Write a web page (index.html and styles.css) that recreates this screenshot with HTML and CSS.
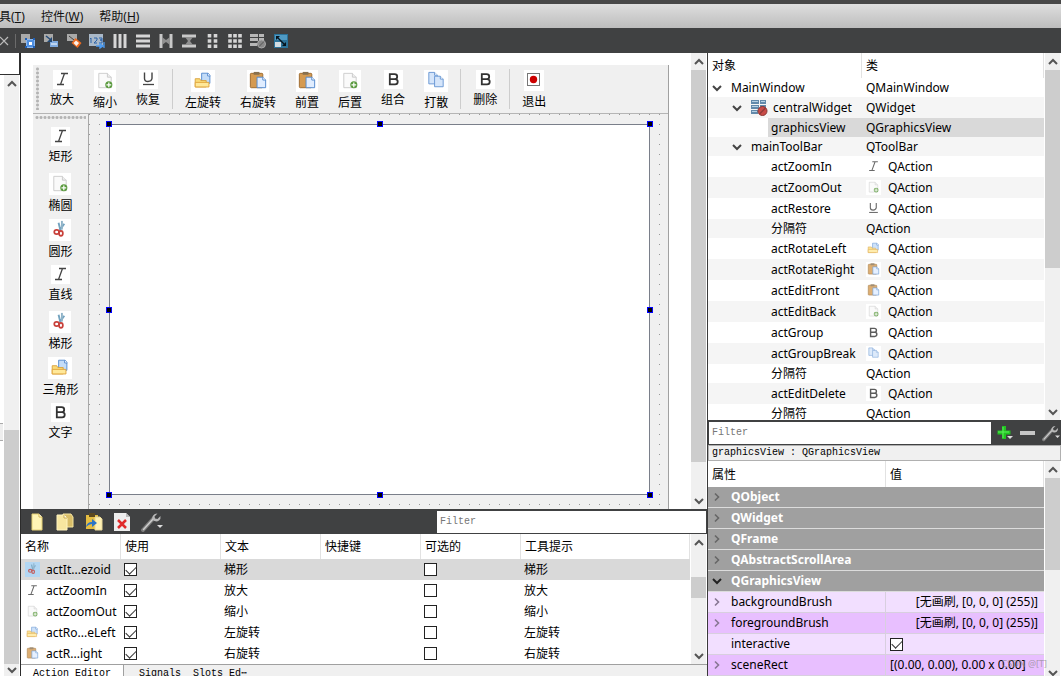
FILE: index.html
```html
<!DOCTYPE html>
<html lang="zh-CN">
<head>
<meta charset="utf-8">
<title>Qt Designer</title>
<link rel="stylesheet" href="styles.css">
</head>
<body>
<svg class="defs" aria-hidden="true">
  <symbol id="italic" viewBox="0 0 19 19"><path d="M8 3.500h7M4 14.500h7M11.500 3.500L7.500 14.500" fill="none" stroke="#444" stroke-width="1.300"/></symbol>
  <symbol id="underline" viewBox="0 0 19 19"><path d="M5.500 2.500v6q0 3 3.500 3t4-3v-6" fill="none" stroke="#444" stroke-width="1.400"/><path d="M4 14.500h11" stroke="#444" stroke-width="1.300"/></symbol>
  <symbol id="bold" viewBox="0 0 18 18"><path d="M5.500 4h4.500q2.500 0 2.500 2.300T10 8.700H5.500zM5.500 8.700H10.500q2.500 0 2.500 2.500T10.500 13.700H5.500z" fill="none" stroke="#333" stroke-width="1.700"/></symbol>
  <symbol id="newdoc" viewBox="0 0 22 23"><path d="M4.500 3.500h9l4 4v11h-13z" fill="#fafafa" stroke="#ccc"/><path d="M13.500 3.500v4h4" fill="#eee" stroke="#ccc"/><circle cx="15" cy="15.500" r="3.700" fill="#5a9a3e"/><path d="M15 13v5M12.500 15.500h5" stroke="#fff" stroke-width="1.300"/></symbol>
  <symbol id="scissors" viewBox="0 0 22 23"><path d="M9.500 4l2 8M15.500 5l-5 7" stroke="#74a3bf" stroke-width="2"/><path d="M13 2v9" stroke="#8fb3c8" stroke-width="2"/><ellipse cx="7.500" cy="13.500" rx="2.500" ry="2.200" fill="none" stroke="#c8403a" stroke-width="1.800"/><ellipse cx="12" cy="15" rx="2" ry="2.600" fill="none" stroke="#c8403a" stroke-width="1.800"/></symbol>
  <symbol id="folder" viewBox="0 0 24 24"><path d="M10.500 3.500h7l2 2v9h-9z" fill="#c3dcf8" stroke="#5289cf"/><path d="M17 3.500v3h3" fill="#fff" stroke="#5289cf"/><path d="M3.500 18.500v-9h5l1 2h6v7z" fill="#fbdb77" stroke="#d9a23e"/><path d="M3.500 18.500v-5h15v5z" fill="#ffe899" stroke="#dfa33a"/></symbol>
  <symbol id="paste" viewBox="0 0 23 23"><rect x="3.500" y="3.500" width="13" height="15" rx="1" fill="#d59a50" stroke="#9c6a2e"/><path d="M7 2h6v3H7z" fill="#89714f"/><path d="M10.500 7.500h6l3 3v8h-9z" fill="#e0edff" stroke="#5289cf"/><path d="M16.500 7.500v3h3" fill="#fff" stroke="#5289cf"/></symbol>
  <symbol id="copy" viewBox="0 0 24 23"><path d="M4.500 2.500h6l3 3v9h-9z" fill="#d5e5fa" stroke="#6a98d4"/><path d="M10.500 6.500h6l3 3v8h-9z" fill="#d5e5fa" stroke="#6a98d4"/><path d="M16.500 6.500v3h3M10.500 2.500v3h3" fill="#fff" stroke="#6a98d4"/></symbol>
  <symbol id="quit" viewBox="0 0 20 21"><rect x="3.500" y="3.500" width="12" height="12" fill="#fff" stroke="#777"/><circle cx="9.500" cy="9.500" r="3.700" fill="#c00"/></symbol>
  <symbol id="down" viewBox="0 0 10 10"><path d="M1 3l4 4 4-4" fill="none" stroke="currentColor" stroke-width="2"/></symbol>
  <symbol id="up" viewBox="0 0 10 10"><path d="M1 7l4-4 4 4" fill="none" stroke="currentColor" stroke-width="2"/></symbol>
  <symbol id="right" viewBox="0 0 10 10"><path d="M3 1.500L6.500 5 3 8.500" fill="none" stroke="currentColor" stroke-width="1.600"/></symbol>
  <symbol id="wrench" viewBox="0 0 22 20"><path d="M2 18L12 7" stroke="#7b7b7b" stroke-width="4" stroke-linecap="round"/><path d="M2.500 17.500L12 7" stroke="#ccc" stroke-width="1.500" stroke-linecap="round"/><path d="M16.500 1.500L13.500 4.500l.5 2 2.500.5 3-3q.5 3-1.500 4.500t-4.500.5q-3-1.500-2-4.500 1.500-3 5-3z" fill="#b9b9b9"/><path d="M16 13h6l-3 3z" fill="#ddd"/></symbol>
  <symbol id="page" viewBox="0 0 16 18"><path d="M3 1h7l3 3v13H3z" fill="#fff4b5" stroke="#e3cf74"/><path d="M10 1v3h3" fill="#fff" stroke="#d3b650"/></symbol>
  <symbol id="pages" viewBox="0 0 18 18"><path d="M7 1h8l2 3v10H7z" fill="#d8bd68" stroke="#f5e5a0"/><path d="M1 2h7l3 3v12H1z" fill="#f7e6a0" stroke="#fff4c0"/><path d="M8 2v3h3" fill="#fff" stroke="#c9ab50"/></symbol>
  <symbol id="pastepage" viewBox="0 0 18 18"><path d="M1 2h12v14H1z" fill="#e5bd42"/><path d="M4 0h6v4H4z" fill="#5c4920"/><path d="M10 4h5l2 2v11h-7z" fill="#fff1b5" stroke="#e8d898"/><path d="M1 14q1-5 6-5V6l5 4-5 4v-3q-3 0-6 3z" fill="#2b74c7"/></symbol>
  <symbol id="deletepage" viewBox="0 0 16 18"><path d="M0 0h12l4 4v14H0z" fill="#eee"/><path d="M12 0v4h4" fill="#bbb"/><path d="M4 7l8 8M12 7l-8 8" stroke="#e02b2b" stroke-width="2.500"/></symbol>
  <symbol id="grid-off" viewBox="0 0 17 16"><path d="M0 0h8v4H0zM9 0h6v4H9zM0 5h8v4H0zM9 5h6v4H9zM0 10h7v4H0z" fill="#6289aa"/><path d="M1 1h6v1H1zM10 1h4v1h-4zM1 6h6v1H1zM1 11h5v1H1z" fill="#b7d1e4"/><circle cx="11.500" cy="11" r="4.500" fill="#c94b47" stroke="#8b3735"/><path d="M8.500 14l6-6" stroke="#913a38" stroke-width="1.500"/></symbol>
</svg>

<div class="app">
  <div class="strip"></div>
  <nav class="menubar">
    <a href="#tools" class="clipped">具(<u>T</u>)</a><a href="#widgets">控件(<u>W</u>)</a><a href="#help">帮助(<u>H</u>)</a>
  </nav>
  <div class="iconbar">
    <button class="close" aria-label="关闭"><svg viewBox="0 0 10 10"><path d="M0 1l8 8M8 1L0 9" stroke="#bbb" stroke-width="1.200"/></svg></button>
    <button aria-label="编辑控件"><svg viewBox="0 0 16 16"><path d="M1 1h9v9H1z" fill="#a9a9a9"/><path d="M6.500 6.500h8v8h-8z" fill="#4f8fe0" stroke="#8cb8f0"/><path d="M9 9h3v3H9z" fill="#fff"/><path d="M5 5h2v2H5zM13 13h2v2h-2zM13 5h2v2h-2zM5 13h2v2H5z" fill="#1f5fb5"/></svg></button>
    <button aria-label="编辑信号/槽"><svg viewBox="0 0 16 16"><path d="M1 1h9v8H1z" fill="#a9a9a9"/><path d="M7 8h8v6H7z" fill="#7faadf"/><path d="M8 11h6" stroke="#fff"/><path d="M3 3l5 4" stroke="#234a77" stroke-width="1.500"/><path d="M9 4v5H4z" fill="#234a77"/></svg></button>
    <button aria-label="编辑伙伴"><svg viewBox="0 0 16 16"><path d="M1 1h10v7H1z" fill="#a9a9a9"/><path d="M3 3l5 4" stroke="#444"/><path d="M9.500 5l6 5-4 5-6-5z" fill="#ee6b20"/><path d="M10 7.500l3 2.500-2.500 3-3-3z" fill="#fff1e8"/></svg></button>
    <button aria-label="编辑Tab顺序"><svg viewBox="0 0 16 16"><path d="M0 1h14v12H0z" fill="#a9b8c8"/><path d="M2 5v5M1 6l1-1M5 5h3v2L5 10h3M10 5h3v2h-2 2v3h-3" fill="none" stroke="#2a62a9"/><path d="M7 13h6M11 11l3 2-3 2zM15 9v6" stroke="#4d9bf0" stroke-width="1.300"/></svg></button>
    <button aria-label="水平布局"><svg viewBox="0 0 16 16"><path d="M3 1v14M8 1v14M13 1v14" stroke="#d6d6d6" stroke-width="3"/></svg></button>
    <button aria-label="垂直布局"><svg viewBox="0 0 16 16"><path d="M1 3h14M1 8h14M1 13h14" stroke="#d6d6d6" stroke-width="3"/></svg></button>
    <button aria-label="水平分裂器布局"><svg viewBox="0 0 16 16"><path d="M3 1v14M13 1v14" stroke="#c8c8c8" stroke-width="3"/><path d="M4 4l4 3 4-3v8L8 9l-4 3z" fill="#909090"/></svg></button>
    <button aria-label="垂直分裂器布局"><svg viewBox="0 0 16 16"><path d="M1 3h14M1 13h14" stroke="#c8c8c8" stroke-width="3"/><path d="M4 4h8L9 8l3 4H4l3-4z" fill="#909090"/></svg></button>
    <button aria-label="表单布局"><svg viewBox="0 0 16 16"><path d="M5.500 1v14M11.500 1v14" stroke="#d6d6d6" stroke-width="3.600" stroke-dasharray="3.500 1.700"/></svg></button>
    <button aria-label="栅格布局"><svg viewBox="0 0 16 16"><path d="M3 1v14M8 1v14M13 1v14" stroke="#d6d6d6" stroke-width="3.600" stroke-dasharray="3.500 1.700"/></svg></button>
    <button aria-label="打破布局"><svg viewBox="0 0 16 16"><path d="M0 1h8v3H0zM9 1h5v3H9zM0 5h8v3H0zM9 5h5v3H9zM0 10h7v3H0z" fill="#b7b7b7"/><circle cx="11.500" cy="11" r="4" fill="#888" stroke="#aaa"/><path d="M9 13.500l5-5" stroke="#555"/></svg></button>
    <button aria-label="调整大小"><svg viewBox="0 0 16 16"><path d="M1 1h14v14H1z" fill="#2c7299"/><path d="M2 9h6v5H2z" fill="#d3dce2"/><path d="M2 2h12v5H2z" fill="#4f9ac4"/><path d="M4 4l8 8" stroke="#07141d" stroke-width="1.300"/><path d="M3 3h4L3 7zM13 13H9l4-4z" fill="#07141d"/></svg></button>
  </div>

  <main class="workspace">
    <aside class="widgetbox">
      <div class="box-filter"></div>
      <div class="box-body">
        <div class="box-list"><span class="box-button"></span></div>
        <div class="scroll s-box"><button aria-label="向上"><svg><use href="#up"/></svg></button><i class="thumb"></i><button aria-label="向下"><svg><use href="#down"/></svg></button></div>
      </div>
    </aside>

    <section class="center">
      <div class="editor">
        <div class="form">
          <div class="toolbar">
            <i class="grip-v"></i>
            <button class="tool"><svg class="i19"><use href="#italic"/></svg>放大</button>
            <button class="tool"><svg class="i22"><use href="#newdoc"/></svg>缩小</button>
            <button class="tool"><svg class="i19"><use href="#underline"/></svg>恢复</button>
            <i class="sep"></i>
            <button class="tool"><svg class="i24"><use href="#folder"/></svg>左旋转</button>
            <button class="tool"><svg class="i22"><use href="#paste"/></svg>右旋转</button>
            <button class="tool"><svg class="i22"><use href="#paste"/></svg>前置</button>
            <button class="tool"><svg class="i22"><use href="#newdoc"/></svg>后置</button>
            <button class="tool"><svg class="i19"><use href="#bold"/></svg>组合</button>
            <button class="tool"><svg class="i24"><use href="#copy"/></svg>打散</button>
            <i class="sep"></i>
            <button class="tool"><svg class="i19"><use href="#bold"/></svg>删除</button>
            <i class="sep"></i>
            <button class="tool"><svg class="i22 quit"><use href="#quit"/></svg>退出</button>
          </div>
          <div class="form-body">
            <div class="sidebar">
              <i class="grip-h"></i>
              <button class="tool"><svg class="i19"><use href="#italic"/></svg>矩形</button>
              <button class="tool"><svg class="i22"><use href="#newdoc"/></svg>椭圆</button>
              <button class="tool"><svg class="i22"><use href="#scissors"/></svg>圆形</button>
              <button class="tool"><svg class="i19"><use href="#italic"/></svg>直线</button>
              <button class="tool"><svg class="i22"><use href="#scissors"/></svg>梯形</button>
              <button class="tool"><svg class="i24"><use href="#folder"/></svg>三角形</button>
              <button class="tool"><svg class="i19"><use href="#bold"/></svg>文字</button>
            </div>
            <div class="canvas">
              <div class="view">
                <i class="h tl"></i><i class="h tc"></i><i class="h tr"></i><i class="h ml"></i><i class="h mr"></i><i class="h bl"></i><i class="h bc"></i><i class="h br"></i>
              </div>
            </div>
          </div>
        </div>
        <div class="scroll s-form"><button aria-label="向上"><svg><use href="#up"/></svg></button><i class="thumb"></i><button aria-label="向下"><svg><use href="#down"/></svg></button></div>
      </div>

      <div class="actions">
        <div class="dockbar">
          <button aria-label="新建"><svg class="d16"><use href="#page"/></svg></button>
          <button aria-label="复制"><svg class="d18"><use href="#pages"/></svg></button>
          <button aria-label="粘贴"><svg class="d18"><use href="#pastepage"/></svg></button>
          <button aria-label="删除"><svg class="d16"><use href="#deletepage"/></svg></button>
          <button aria-label="配置"><svg class="d22"><use href="#wrench"/></svg></button>
          <input class="filter" type="text" placeholder="Filter" aria-label="Filter">
        </div>
        <div class="pane">
          <table class="grid">
            <colgroup><col class="c100"><col class="c100"><col class="c100"><col class="c100"><col class="c100"><col></colgroup>
            <thead><tr><th>名称</th><th>使用</th><th>文本</th><th>快捷键</th><th>可选的</th><th>工具提示</th></tr></thead>
            <tbody>
              <tr class="selected"><td><span class="act"><svg class="s15 hot"><use href="#scissors"/></svg>actIt...ezoid</span></td><td><input type="checkbox" checked aria-label="使用"></td><td>梯形</td><td></td><td><input type="checkbox" aria-label="可选的"></td><td>梯形</td></tr>
              <tr><td><span class="act"><svg class="s15"><use href="#italic"/></svg>actZoomIn</span></td><td><input type="checkbox" checked aria-label="使用"></td><td>放大</td><td></td><td><input type="checkbox" aria-label="可选的"></td><td>放大</td></tr>
              <tr><td><span class="act"><svg class="s15"><use href="#newdoc"/></svg>actZoomOut</span></td><td><input type="checkbox" checked aria-label="使用"></td><td>缩小</td><td></td><td><input type="checkbox" aria-label="可选的"></td><td>缩小</td></tr>
              <tr><td><span class="act"><svg class="s15"><use href="#folder"/></svg>actRo...eLeft</span></td><td><input type="checkbox" checked aria-label="使用"></td><td>左旋转</td><td></td><td><input type="checkbox" aria-label="可选的"></td><td>左旋转</td></tr>
              <tr><td><span class="act"><svg class="s15"><use href="#paste"/></svg>actR...ight</span></td><td><input type="checkbox" checked aria-label="使用"></td><td>右旋转</td><td></td><td><input type="checkbox" aria-label="可选的"></td><td>右旋转</td></tr>
            </tbody>
          </table>
          <div class="scroll s-act"><button aria-label="向上"><svg><use href="#up"/></svg></button><i class="thumb"></i><button aria-label="向下"><svg><use href="#down"/></svg></button></div>
        </div>
        <div class="tabs"><button class="tab active">Action Editor</button><button class="tab">Signals&nbsp;&nbsp;Slots Ed⋯</button></div>
      </div>
    </section>

    <aside class="inspector">
      <div class="pane tree-pane">
        <table class="tree">
          <colgroup><col class="c-object"><col></colgroup>
          <thead><tr><th>对象</th><th>类</th></tr></thead>
          <tbody>
            <tr><td class="l0"><span class="node"><button class="twist" aria-label="折叠"><svg><use href="#down"/></svg></button>MainWindow</span></td><td>QMainWindow</td></tr>
            <tr class="tall"><td class="l1"><span class="node"><button class="twist" aria-label="折叠"><svg><use href="#down"/></svg></button><svg class="s17"><use href="#grid-off"/></svg>centralWidget</span></td><td>QWidget</td></tr>
            <tr class="current"><td class="l2"><span class="node">graphicsView</span></td><td>QGraphicsView</td></tr>
            <tr><td class="l1"><span class="node"><button class="twist" aria-label="折叠"><svg><use href="#down"/></svg></button>mainToolBar</span></td><td>QToolBar</td></tr>
            <tr class="tall"><td class="l2">actZoomIn</td><td><span class="act"><svg class="s15"><use href="#italic"/></svg>QAction</span></td></tr>
            <tr class="tall"><td class="l2">actZoomOut</td><td><span class="act"><svg class="s15"><use href="#newdoc"/></svg>QAction</span></td></tr>
            <tr class="tall"><td class="l2">actRestore</td><td><span class="act"><svg class="s15"><use href="#underline"/></svg>QAction</span></td></tr>
            <tr><td class="l2">分隔符</td><td>QAction</td></tr>
            <tr class="tall"><td class="l2">actRotateLeft</td><td><span class="act"><svg class="s15"><use href="#folder"/></svg>QAction</span></td></tr>
            <tr class="tall"><td class="l2">actRotateRight</td><td><span class="act"><svg class="s15"><use href="#paste"/></svg>QAction</span></td></tr>
            <tr class="tall"><td class="l2">actEditFront</td><td><span class="act"><svg class="s15"><use href="#paste"/></svg>QAction</span></td></tr>
            <tr class="tall"><td class="l2">actEditBack</td><td><span class="act"><svg class="s15"><use href="#newdoc"/></svg>QAction</span></td></tr>
            <tr class="tall"><td class="l2">actGroup</td><td><span class="act"><svg class="s15"><use href="#bold"/></svg>QAction</span></td></tr>
            <tr class="tall"><td class="l2">actGroupBreak</td><td><span class="act"><svg class="s15"><use href="#copy"/></svg>QAction</span></td></tr>
            <tr><td class="l2">分隔符</td><td>QAction</td></tr>
            <tr class="tall"><td class="l2">actEditDelete</td><td><span class="act"><svg class="s15"><use href="#bold"/></svg>QAction</span></td></tr>
            <tr><td class="l2">分隔符</td><td>QAction</td></tr>
          </tbody>
        </table>
        <div class="scroll s-tree"><button aria-label="向上"><svg><use href="#up"/></svg></button><i class="thumb"></i><button aria-label="向下"><svg><use href="#down"/></svg></button></div>
      </div>
      <div class="propbar">
        <input class="filter" type="text" placeholder="Filter" aria-label="Filter">
        <button aria-label="添加"><svg class="d18" viewBox="0 0 18 18"><path d="M8 2v13M1.500 8.500h13" stroke="#21c321" stroke-width="4"/><path d="M7 3v11M2 8h11" stroke="#5df05d"/><path d="M11 12h6l-3 3z" fill="#ddd"/></svg></button>
        <button aria-label="移除"><svg class="d18" viewBox="0 0 18 18"><path d="M1 9h15" stroke="#c6c6c6" stroke-width="4"/></svg></button>
        <button aria-label="配置"><svg class="d18"><use href="#wrench"/></svg></button>
      </div>
      <div class="proptitle">graphicsView : QGraphicsView</div>
      <div class="pane prop-pane">
        <table class="props">
          <colgroup><col class="c-prop"><col></colgroup>
          <thead><tr><th>属性</th><th>值</th></tr></thead>
          <tbody>
            <tr class="group"><td colspan="2"><span class="node"><button class="twist" aria-label="展开"><svg><use href="#right"/></svg></button>QObject</span></td></tr>
            <tr class="group"><td colspan="2"><span class="node"><button class="twist" aria-label="展开"><svg><use href="#right"/></svg></button>QWidget</span></td></tr>
            <tr class="group"><td colspan="2"><span class="node"><button class="twist" aria-label="展开"><svg><use href="#right"/></svg></button>QFrame</span></td></tr>
            <tr class="group"><td colspan="2"><span class="node"><button class="twist" aria-label="展开"><svg><use href="#right"/></svg></button>QAbstractScrollArea</span></td></tr>
            <tr class="group open"><td colspan="2"><span class="node"><button class="twist" aria-label="折叠"><svg><use href="#down"/></svg></button>QGraphicsView</span></td></tr>
            <tr class="light"><td><span class="node"><button class="twist" aria-label="展开"><svg><use href="#right"/></svg></button>backgroundBrush</span></td><td class="brush">[无画刷, [0, 0, 0] (255)]</td></tr>
            <tr class="deep"><td><span class="node"><button class="twist" aria-label="展开"><svg><use href="#right"/></svg></button>foregroundBrush</span></td><td class="brush">[无画刷, [0, 0, 0] (255)]</td></tr>
            <tr class="light"><td class="leaf"><label for="interactive">interactive</label></td><td><input id="interactive" type="checkbox" checked></td></tr>
            <tr class="deep"><td><span class="node"><button class="twist" aria-label="展开"><svg><use href="#right"/></svg></button>sceneRect</span></td><td>[(0.00, 0.00), 0.00 x 0.00]</td></tr>
          </tbody>
        </table>
        <div class="scroll s-prop"><button aria-label="向上"><svg><use href="#up"/></svg></button><i class="thumb"></i><button aria-label="向下"><svg><use href="#down"/></svg></button></div>
        <span class="watermark">CSDN @[T]</span>
      </div>
    </aside>
  </main>
</div>
</body>
</html>
```

FILE: styles.css
```css
* { box-sizing: border-box; }
body {
  margin: 0;
  color: #000;
  background: #fff;
  font: 12px/16px "Noto Sans", "Noto Sans CJK SC", sans-serif;
}
button {
  padding: 0;
  border: 0;
  background: none;
  color: inherit;
  font: inherit;
}
svg { display: block; flex: none; }
.defs { position: absolute; width: 0; height: 0; }
i { display: block; flex: none; }

.app { display: flex; flex-direction: column; height: 100vh; overflow: hidden; }
.strip { flex: none; height: 4px; background: #474747; }
.menubar {
  flex: none;
  display: flex;
  align-items: center;
  gap: 16px;
  height: 24px;
  padding-top: 2px;
  background: linear-gradient(#dedede, #bdbdbd);
}
.menubar a { color: #111; text-decoration: none; }
.menubar .clipped { margin-left: -1px; }

.iconbar {
  flex: none;
  display: flex;
  align-items: center;
  gap: 7px;
  height: 25px;
  background: #404142;
}
.iconbar svg { width: 16px; height: 16px; }
.iconbar .close { width: 16px; margin-right: -3px; border-right: 1px solid #6b6b6b; }
.iconbar .close svg { width: 10px; height: 14px; }

.workspace { flex: 1; min-height: 0; display: grid; grid-template-columns: 21px 1fr 354px; }

/* Scroll bars */
.scroll { flex: none; width: 16px; display: flex; flex-direction: column; background: #f0f0f0; border-right: 1px solid #fff; }
.scroll button { flex: none; display: grid; place-items: center; height: 17px; color: #555; }
.scroll button:last-child { margin-top: auto; }
.scroll svg { width: 10px; height: 10px; }
.thumb { background: #cdcdcd; }
.s-box .thumb { height: 39%; margin-top: auto; }
.s-box button:last-child { margin: 0; height: 12px; }
.s-form .thumb { height: 86%; }
.s-tree .thumb { height: 54%; }
.s-act .thumb { height: 21px; margin-top: 26px; }
.s-prop .thumb { height: 43%; }
.s-prop button:last-child { height: 8px; overflow: hidden; }

/* Widget box */
.widgetbox { display: flex; flex-direction: column; border-right: 1px solid #2b2b2b; min-height: 0; }
.box-filter { flex: none; height: 22px; border: solid #303030; border-width: 0 1px 1px 0; }
.box-body { flex: 1; display: flex; min-height: 0; }
.box-list { width: 4px; display: flex; align-items: flex-end; }
.box-button { width: 3px; height: 18px; margin-bottom: 235px; border: solid #aaa; border-width: 1px 0; background: #eee; }

/* Form editor */
.center { display: flex; flex-direction: column; min-width: 0; min-height: 0; }
.editor { flex: 1; display: flex; justify-content: space-between; min-height: 0; }
.form {
  flex: 1;
  display: flex;
  flex-direction: column;
  margin: 12px 22px 0 12px;
  border-right: 1px solid #a0a0a0;
  background: #f0f0f0;
  min-width: 0;
}
.toolbar {
  flex: none;
  display: flex;
  gap: 1px;
  height: 49px;
  padding: 2px 0 0 3px;
  border-bottom: 1px solid #b5b5b5;
}
.grip-v {
  width: 3px;
  height: 43px;
  margin-right: 1px;
  background: radial-gradient(circle, #b4b4b4 1px, transparent 2px) 0 0 / 3px 4px;
}
.grip-h {
  width: 51px;
  height: 3px;
  margin-bottom: 7px;
  background: radial-gradient(circle, #b4b4b4 1px, transparent 2px) 0 0 / 4px 3px;
}
.sep { width: 1px; height: 40px; margin: 2px 2px; background: #cdcdcd; }
.tool {
  flex: none;
  display: flex;
  flex-direction: column;
  align-items: center;
  gap: 3px;
  padding: 3px 9px 0;
  white-space: nowrap;
}
.tool svg { background: #fff; }
.i19 { width: 19px; height: 19px; }
.i22 { width: 22px; height: 22px; }
.i24 { width: 24px; height: 22px; }
.i22.quit { width: 20px; height: 21px; }
.form-body { flex: 1; display: flex; min-height: 0; }
.sidebar {
  flex: none;
  display: flex;
  flex-direction: column;
  align-items: center;
  width: 56px;
  padding-top: 2px;
  border-right: 1px solid #a8a8a8;
  overflow: hidden;
}
.sidebar .tool { height: 46px; padding: 1px 0 0; }
.canvas {
  flex: 1;
  display: flex;
  padding: 10px 18px 14px 20px;
  background: conic-gradient(from 0deg at 1px 1px, #f0f0f0 270deg, #999 0) 0 0 / 10px 10px;
}
.view { flex: 1; position: relative; border: 1px solid #7a7f8a; background: #fff; }
.h { position: absolute; width: 6px; height: 6px; border: 1px solid #00f; background: #000; }
.tl, .tc, .tr { top: -4px; }
.ml, .mr { top: calc(50% - 3px); }
.bl, .bc, .br { bottom: -4px; }
.tl, .ml, .bl { left: -4px; }
.tc, .bc { left: calc(50% - 3px); }
.tr, .mr, .br { right: -4px; }

/* Docks */
.actions { flex: none; }
.dockbar, .propbar { display: flex; align-items: center; height: 25px; background: #404142; }
.dockbar { padding: 1px 1px 1px 8px; gap: 11px; }
.dockbar .filter { width: 269px; margin-left: auto; }
.propbar { gap: 5px; padding: 1px 1px 1px 1px; flex: none; }
.propbar .filter { flex: 1; }
.filter {
  min-width: 0;
  height: 22px;
  padding: 0 3px;
  border: 0;
  border-radius: 0;
  background: #fff;
  font: 10px/22px "Liberation Mono", monospace;
}
.filter::placeholder { color: #777; opacity: 1; }
.d16 { width: 16px; height: 18px; }
.d18 { width: 18px; height: 18px; }
.d22 { width: 22px; height: 20px; }

.pane { display: flex; min-height: 0; position: relative; }
table { flex: 1; width: 100%; min-width: 0; table-layout: fixed; border-spacing: 0; align-self: flex-start; margin-right: 1px; }
th { height: 25px; padding: 1px 4px 0; border-right: 1px solid #e2e2e2; text-align: left; font-weight: 400; }
td { height: 21px; padding: 0 4px; white-space: nowrap; line-height: 18px; overflow: hidden; }
.c100 { width: 100px; }
.c-object { width: 154px; }
.c-prop { width: 178px; }
.act, .node { display: flex; align-items: center; }
.act { gap: 6px; }
.s15 { width: 15px; height: 15px; background: #fff; }
.s15 use { opacity: .8; }
.s15.hot { background: #b3d7f3; }
.s17 { width: 17px; height: 16px; margin-right: 5px; }
.selected td { background: #d9d9d9; }
.grid td:not(:first-child) { padding-left: 3px; }

input[type="checkbox"] {
  appearance: none;
  display: grid;
  place-items: center;
  width: 13px;
  height: 13px;
  margin: 0;
  border: 1px solid #222;
  background: #fff;
}
input[type="checkbox"]:checked::after {
  content: "";
  width: 9px;
  height: 5px;
  border: solid #333;
  border-width: 0 0 1px 1px;
  transform: translateY(-1px) rotate(-45deg);
}

.tabs {
  display: flex;
  height: 12px;
  overflow: hidden;
  border-top: 1px solid #a0a0a0;
  background: #f0f0f0;
}
.tab { padding: 1px 15px 0; height: 16px; font: 10px/14px "Liberation Mono", monospace; white-space: nowrap; }
.tab.active { padding: 1px 12px 0; background: #fff; border-right: 1px solid #a0a0a0; }

/* Object tree and properties */
.inspector { display: flex; flex-direction: column; border-left: 1px solid #3a3a3a; min-width: 0; min-height: 0; }
.tree-pane { flex: 1; overflow: hidden; }
.tree td { height: 19px; }
.tree .act { gap: 7px; }
.tree .tall td { height: 21px; }
.tree tbody tr:nth-child(even) td { background: #f5f5f5; }
.tree .current td:last-child, .tree .current .node { background: #d9d9d9; }
.tree .l0 { padding-left: 4px; }
.tree .l1 { padding-left: 24px; }
.tree .l2 { padding-left: 63px; }
.tree .current .l2 { padding: 0 0 0 60px; }
.tree .current .node { height: 19px; padding-left: 3px; }
.twist { width: 19px; color: #444; }
.twist svg { width: 10px; height: 10px; }

.proptitle {
  flex: none;
  height: 16px;
  padding-left: 3px;
  border: 1px solid #b0b0b0;
  background: #f0f0f0;
  font: 10px/14px "Liberation Mono", monospace;
}
.prop-pane { flex: none; height: 215px; overflow: hidden; }
.props td { border-bottom: 1px solid #d8cfdf; }
.props th { height: 26px; }
.props .group td { background: #a0a0a0; color: #fff; font-weight: 700; border-color: #dcdcdc; }
.group .twist { color: #666; }
.group.open .twist { color: #222; }
.light td { background: #f2dfff; }
.deep td { background: #e8bfff; }
.light .twist, .deep .twist { color: #887794; }
.light td:first-child, .deep td:first-child { border-right: 1px solid #d8cfdf; }
.props .leaf { padding-left: 23px; }
.props .brush { padding-right: 6px; text-align: right; }
.watermark { position: absolute; right: 14px; bottom: 6px; color: #888a; font-size: 9px; line-height: 12px; }
```
